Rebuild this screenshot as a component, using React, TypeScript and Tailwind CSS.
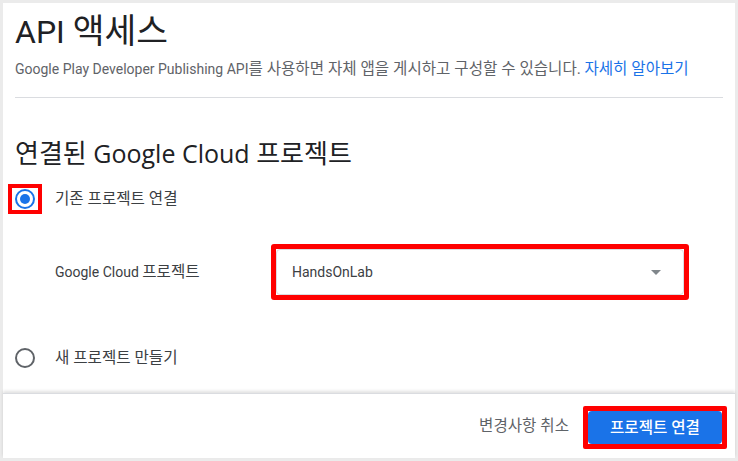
import React from "react";

const font = { fontFamily: '"Roboto", "Noto Sans CJK KR", sans-serif' };

// Korean glyphs in the shot render a bit larger than the latin text around them
function K({ children, size = "text-[15.6px]" }: { children: React.ReactNode; size?: string }) {
  return <span className={size}>{children}</span>;
}

function Radio({ checked, outlined }: { checked?: boolean; outlined?: boolean }) {
  return (
    <div
      className={`-ml-[7px] flex h-[30px] w-[34px] shrink-0 items-center justify-center border-4 ${
        outlined ? "border-[#ff0000]" : "border-transparent"
      }`}
    >
      <div
        className={`flex h-5 w-5 items-center justify-center rounded-full border-2 ${
          checked ? "border-[#1a73e8]" : "border-[#5f6368]"
        }`}
      >
        {checked && <div className="h-2.5 w-2.5 rounded-full bg-[#1a73e8]" />}
      </div>
    </div>
  );
}

export default function App() {
  return (
    <div className="min-h-[461px] bg-[#ebebeb] p-[3px]" style={font}>
      <div className="flex h-[455px] flex-col bg-white">
        <div className="flex-1 px-3">
          <h1 className="pt-2 text-[32px] leading-10 font-normal text-[#202124]">
            API <K size="text-[34.5px]">액세스</K>
          </h1>
          <p className="mt-[7px] text-sm leading-5 text-[#5f6368]">
            Google Play Developer Publishing API<K>를 사용하면 자체 앱을 게시하고 구성할 수 있습니다.</K>{" "}
            <span className="text-[#1a73e8]">
              <K>자세히 알아보기</K>
            </span>
          </p>
          <hr className="mt-[18px] border-t border-[#dadce0]" />

          <h2
            className="mt-[39px] text-[25px] leading-8 font-normal text-[#202124]"
            style={{ fontFamily: '"Open Sans", "Noto Sans CJK KR", sans-serif' }}
          >
            <K size="text-[26px]">연결된</K> Google Cloud <K size="text-[26px]">프로젝트</K>
          </h2>

          {/* existing project */}
          <div className="mt-[15px] flex items-center">
            <Radio checked outlined />
            <span className="ml-[13px] text-sm leading-5 text-[#3c4043]">
              <K>기존 프로젝트 연결</K>
            </span>
          </div>

          <div className="mt-[30px] flex items-center">
            <div className="w-[256px] pl-10 text-sm leading-5 text-[#3c4043]">
              Google Cloud <K>프로젝트</K>
            </div>
            <div className="h-[56px] w-[418px] rounded-[3px] border-[5px] border-[#ff0000]">
              <div className="flex h-full items-center justify-between rounded-sm border border-[#dadce0] pr-[22px] pl-[15px]">
                <span className="text-sm text-[#3c4043]">HandsOnLab</span>
                <svg width="10" height="5" viewBox="0 0 10 5">
                  <path d="M0 0h10L5 5z" fill="#80868b" />
                </svg>
              </div>
            </div>
          </div>

          {/* new project */}
          <div className="mt-[43px] flex items-center">
            <Radio />
            <span className="ml-[13px] text-sm leading-5 text-[#3c4043]">
              <K>새 프로젝트 만들기</K>
            </span>
          </div>
        </div>

        <div className="flex h-[65px] items-start justify-end border-t border-[#dadce0] pt-[12px] pr-2 shadow-[0_-2px_3px_rgba(0,0,0,0.12)]">
          <button className="mt-[10px] mr-[14px] text-sm leading-5 text-[#5f6368]">
            <K>변경사항 취소</K>
          </button>
          <div className="rounded-[2px] border-[5px] border-[#ff0000]">
            <button className="h-[33px] w-[134px] rounded-sm bg-[#1a73e8] text-sm leading-5 font-medium text-white">
              <K>프로젝트 연결</K>
            </button>
          </div>
        </div>
      </div>
    </div>
  );
}
